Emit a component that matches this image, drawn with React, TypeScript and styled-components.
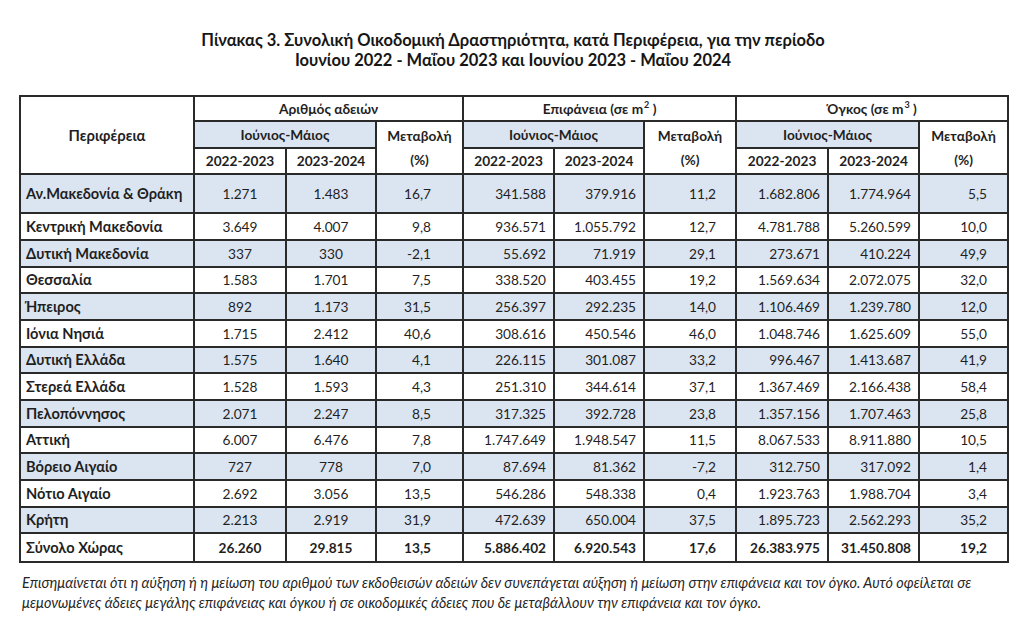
import React from "react";
import styled, { createGlobalStyle } from "styled-components";

const GlobalStyle = createGlobalStyle`
  html, body { margin: 0; padding: 0; background: #ffffff; }
  body { font-family: Lato, "Open Sans", "Noto Sans", sans-serif; color: #1f1f1f; }
`;

const Page = styled.div`
  width: 1024px;
  box-sizing: border-box;
  padding: 30px 17px 0 19px;
`;

const Title = styled.h1`
  margin: 0;
  text-align: center;
  font-size: 16.5px;
  line-height: 20px;
  font-weight: 700;
  color: #161616;
`;

const Table = styled.table`
  margin-top: 25px;
  width: 988px;
  border-collapse: collapse;
  table-layout: fixed;
  font-size: 13.7px;
  color: #1f1f1f;
`;

const HeadRow = styled.tr<{ $h: number }>`
  height: ${(p) => p.$h}px;
`;

const HeadCell = styled.th<{ $shade?: boolean; $stack?: boolean; $big?: boolean }>`
  border: 2px solid #2a2a2a;
  background: ${(p) => (p.$shade ? "#dbe5f1" : "#ffffff")};
  font-weight: 700;
  font-size: ${(p) => (p.$big ? "14.8px" : "inherit")};
  text-align: center;
  vertical-align: middle;
  padding: 0;
  line-height: ${(p) => (p.$stack ? "24px" : "18px")};
`;

const Sup = styled.sup`
  font-size: 9px;
  position: relative;
  top: -6px;
  vertical-align: baseline;
  line-height: 0;
  margin-left: 1px;
`;

const Row = styled.tr<{ $shade: boolean; $h: number }>`
  background: ${(p) => (p.$shade ? "#dbe5f1" : "#ffffff")};
  height: ${(p) => p.$h}px;
`;

const Cell = styled.td<{ $align: "left" | "center" | "right"; $pad: number; $bold?: boolean; $name?: boolean }>`
  border: 2px solid #2a2a2a;
  text-align: ${(p) => p.$align};
  padding: 0 ${(p) => (p.$align === "right" ? p.$pad : 0)}px 0 ${(p) => (p.$align === "left" ? p.$pad : 0)}px;
  font-weight: ${(p) => (p.$bold ? 700 : 400)};
  font-size: ${(p) => (p.$name ? "14.6px" : "inherit")};
  vertical-align: middle;
  white-space: nowrap;
  line-height: 18px;
`;

const Note = styled.p`
  margin: 10px 0 0 3px;
  font-size: 14.4px;
  line-height: 20px;
  font-style: italic;
  color: #262626;
  white-space: nowrap;
`;

const widths = [174, 92, 90, 87, 91, 90, 92, 92, 91, 89];

type Align = "left" | "center" | "right";
const colFmt: { align: Align; pad: number }[] = [
  { align: "left", pad: 5 },
  { align: "center", pad: 0 },
  { align: "center", pad: 0 },
  { align: "right", pad: 31 },
  { align: "right", pad: 7 },
  { align: "right", pad: 7 },
  { align: "right", pad: 19 },
  { align: "right", pad: 7 },
  { align: "right", pad: 7 },
  { align: "right", pad: 20 },
];

const rows: string[][] = [
  ["Αν.Μακεδονία & Θράκη", "1.271", "1.483", "16,7", "341.588", "379.916", "11,2", "1.682.806", "1.774.964", "5,5"],
  ["Κεντρική Μακεδονία", "3.649", "4.007", "9,8", "936.571", "1.055.792", "12,7", "4.781.788", "5.260.599", "10,0"],
  ["Δυτική Μακεδονία", "337", "330", "-2,1", "55.692", "71.919", "29,1", "273.671", "410.224", "49,9"],
  ["Θεσσαλία", "1.583", "1.701", "7,5", "338.520", "403.455", "19,2", "1.569.634", "2.072.075", "32,0"],
  ["Ήπειρος", "892", "1.173", "31,5", "256.397", "292.235", "14,0", "1.106.469", "1.239.780", "12,0"],
  ["Ιόνια Νησιά", "1.715", "2.412", "40,6", "308.616", "450.546", "46,0", "1.048.746", "1.625.609", "55,0"],
  ["Δυτική Ελλάδα", "1.575", "1.640", "4,1", "226.115", "301.087", "33,2", "996.467", "1.413.687", "41,9"],
  ["Στερεά Ελλάδα", "1.528", "1.593", "4,3", "251.310", "344.614", "37,1", "1.367.469", "2.166.438", "58,4"],
  ["Πελοπόννησος", "2.071", "2.247", "8,5", "317.325", "392.728", "23,8", "1.357.156", "1.707.463", "25,8"],
  ["Αττική", "6.007", "6.476", "7,8", "1.747.649", "1.948.547", "11,5", "8.067.533", "8.911.880", "10,5"],
  ["Βόρειο Αιγαίο", "727", "778", "7,0", "87.694", "81.362", "-7,2", "312.750", "317.092", "1,4"],
  ["Νότιο Αιγαίο", "2.692", "3.056", "13,5", "546.286", "548.338", "0,4", "1.923.763", "1.988.704", "3,4"],
  ["Κρήτη", "2.213", "2.919", "31,9", "472.639", "650.004", "37,5", "1.895.723", "2.562.293", "35,2"],
];

const total = ["Σύνολο Χώρας", "26.260", "29.815", "13,5", "5.886.402", "6.920.543", "17,6", "26.383.975", "31.450.808", "19,2"];

const rowHeights = [39, 27, 27, 26, 27, 27, 26, 27, 27, 26, 27, 27, 26];

const groups: React.ReactNode[] = [
  "Αριθμός αδειών",
  <>Επιφάνεια (σε m<Sup>2</Sup> )</>,
  <>Όγκος (σε m<Sup>3</Sup> )</>,
];

export default function App() {
  return (
    <>
      <GlobalStyle />
      <Page>
        <Title>
          Πίνακας 3. Συνολική Οικοδομική Δραστηριότητα, κατά Περιφέρεια, για την περίοδο
          <br />
          Ιουνίου 2022 - Μαΐου 2023 και Ιουνίου 2023 - Μαΐου 2024
        </Title>
        <Table>
          <colgroup>
            {widths.map((w, i) => (
              <col key={i} style={{ width: w }} />
            ))}
          </colgroup>
          <thead>
            <HeadRow $h={25}>
              <HeadCell rowSpan={3} $big>
                Περιφέρεια
              </HeadCell>
              {groups.map((g, i) => (
                <HeadCell key={i} colSpan={3}>
                  {g}
                </HeadCell>
              ))}
            </HeadRow>
            <HeadRow $h={27}>
              {groups.map((_, i) => (
                <React.Fragment key={i}>
                  <HeadCell colSpan={2} $shade>
                    Ιούνιος-Μάιος
                  </HeadCell>
                  <HeadCell rowSpan={2} $stack>
                    Μεταβολή
                    <br />
                    (%)
                  </HeadCell>
                </React.Fragment>
              ))}
            </HeadRow>
            <HeadRow $h={26}>
              {groups.map((_, i) => (
                <React.Fragment key={i}>
                  <HeadCell>2022-2023</HeadCell>
                  <HeadCell>2023-2024</HeadCell>
                </React.Fragment>
              ))}
            </HeadRow>
          </thead>
          <tbody>
            {rows.map((r, ri) => (
              <Row key={ri} $shade={ri % 2 === 0} $h={rowHeights[ri]}>
                {r.map((v, ci) => (
                  <Cell
                    key={ci}
                    $align={colFmt[ci].align}
                    $pad={colFmt[ci].pad}
                    $bold={ci === 0}
                    $name={ci === 0}
                  >
                    {v}
                  </Cell>
                ))}
              </Row>
            ))}
            <Row $shade={false} $h={29}>
              {total.map((v, ci) => (
                <Cell key={ci} $align={colFmt[ci].align} $pad={colFmt[ci].pad} $bold $name={ci === 0}>
                  {v}
                </Cell>
              ))}
            </Row>
          </tbody>
        </Table>
        <Note>
          Επισημαίνεται ότι η αύξηση ή η μείωση του αριθμού των εκδοθεισών αδειών δεν συνεπάγεται αύξηση ή μείωση στην επιφάνεια και τον όγκο. Αυτό οφείλεται σε
          <br />
          μεμονωμένες άδειες μεγάλης επιφάνειας και όγκου ή σε οικοδομικές άδειες που δε μεταβάλλουν την επιφάνεια και τον όγκο.
        </Note>
      </Page>
    </>
  );
}
